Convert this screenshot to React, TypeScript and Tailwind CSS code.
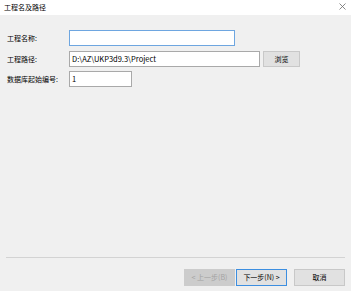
import React from 'react';

const font = { fontFamily: '"Noto Sans CJK SC", "Noto Sans", sans-serif' };

const Row: React.FC<{ label: string; children: React.ReactNode }> = ({ label, children }) => (
    <div className="flex items-center h-[16px]">
        <div className="w-[62px] text-[7px] text-black leading-none">{label}</div>
        {children}
    </div>
);

const App: React.FC = () => {
    return (
        <div className="w-[351px] h-[291px] bg-[#f0f0f0] flex flex-col overflow-hidden" style={font}>
            {/* title bar */}
            <div className="h-[15px] bg-white flex items-center justify-between pl-[4px] pr-[5px]">
                <span className="text-[7px] text-black leading-none">工程名及路径</span>
                <svg width="7" height="7" viewBox="0 0 7 7" className="mb-[2px]">
                    <path d="M0.5 0.5 L6.5 6.5 M6.5 0.5 L0.5 6.5" stroke="#6b6b6b" strokeWidth="0.8" fill="none" />
                </svg>
            </div>

            <div className="pl-[7px] pt-[15px] flex flex-col">
                <Row label="工程名称:">
                    <div className="w-[166px] h-[16px] bg-white border border-[#6ea6e0]"></div>
                </Row>
                <div className="mt-[5px]">
                    <Row label="工程路径:">
                        <div className="w-[191px] h-[16px] bg-white border border-[#a9a9a9] flex items-center pl-[2px] text-[7.5px] text-black leading-none">
                            D:\AZ\UKP3d9.3\Project
                        </div>
                        <button className="ml-[3px] w-[37px] h-[16px] bg-[#e1e1e1] border border-[#c8c8c8] text-[7px] text-black leading-none">
                            浏览
                        </button>
                    </Row>
                </div>
                <div className="mt-[4px]">
                    <Row label="数据库起始编号:">
                        <div className="w-[63px] h-[16px] bg-white border border-[#a9a9a9] flex items-center pl-[2px] text-[7.5px] text-black leading-none">
                            1
                        </div>
                    </Row>
                </div>
            </div>

            <div className="flex-1"></div>

            <div className="mx-[6px] h-px bg-[#d3d3d3]"></div>

            <div className="flex justify-end items-center pr-[6px] mt-[11px] mb-[5px]">
                <button className="w-[51px] h-[17px] bg-[#cccccc] border border-[#cccccc] text-[7px] text-[#a3a3a3] leading-none">
                    &lt; 上一步(B)
                </button>
                <button className="ml-[1px] w-[51px] h-[17px] bg-[#e1e1e1] border border-[#3c8ee0] text-[7px] text-black leading-none">
                    下一步(N) &gt;
                </button>
                <button className="ml-[7px] w-[51px] h-[17px] bg-[#e1e1e1] border border-[#c8c8c8] text-[7px] text-black leading-none">
                    取消
                </button>
            </div>
        </div>
    );
};

export default App;
